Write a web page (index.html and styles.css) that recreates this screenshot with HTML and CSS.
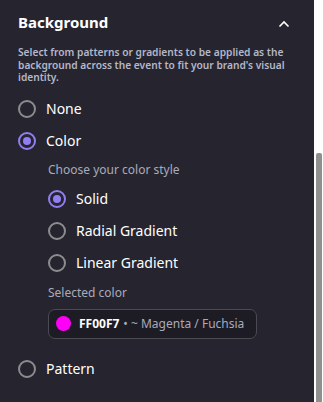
FILE: index.html
```html
<!DOCTYPE html>
<html>
<head>
<meta charset="utf-8">
<link rel="stylesheet" href="styles.css">
</head>
<body>
<div class="frame">
  <div class="panel">
    <div class="header">
      <h2 class="title">Background</h2>
      <svg class="chev" width="12" height="8" viewBox="0 0 12 8"><path d="M1.5 6.5 L6 2 L10.5 6.5" fill="none" stroke="#ffffff" stroke-width="1.6"/></svg>
    </div>
    <p class="desc">Select from patterns or gradients to be applied as the background across the event to fit your brand's visual identity.</p>
    <div class="options">
      <div class="radio"><span class="dot"></span><span class="label">None</span></div>
      <div class="radio on"><span class="dot"></span><span class="label">Color</span></div>
      <div class="sub">
        <div class="hint">Choose your color style</div>
        <div class="radio on"><span class="dot"></span><span class="label">Solid</span></div>
        <div class="radio"><span class="dot"></span><span class="label">Radial Gradient</span></div>
        <div class="radio"><span class="dot"></span><span class="label">Linear Gradient</span></div>
        <div class="hint hint2">Selected color</div>
        <div class="colorbox"><span class="swatch"></span><span class="hex">FF00F7</span><span class="name">• ~ Magenta / Fuchsia</span></div>
      </div>
      <div class="radio pattern"><span class="dot"></span><span class="label">Pattern</span></div>
    </div>
  </div>
  <div class="track"><div class="thumb"></div></div>
</div>
</body>
</html>
```
FILE: styles.css
```css
html, body { margin: 0; padding: 0; }
body { background: #26252f; font-family: "Noto Sans", "Open Sans", sans-serif; }
.frame { display: flex; width: 323px; height: 402px; overflow: hidden; }
.panel { width: 314px; background: #26252f; padding: 0 18px; box-sizing: border-box; }
.track { width: 9px; background: #fdfdfd; padding-top: 153px; box-sizing: border-box; display: flex; justify-content: center; }
.thumb { width: 6px; height: 260px; background: #8f8f8f; border-radius: 2px 2px 0 0; }
.header { display: flex; align-items: center; justify-content: space-between; height: 44px; padding-right: 6px; }
.title { margin: 0; font-size: 15px; font-weight: 700; color: #ffffff; }
.chev { margin-top: 3px; }
.desc { margin: 2px 0 0; font-size: 10.2px; line-height: 12.5px; font-weight: 600; color: #b4b7c9; }
.options { display: flex; flex-direction: column; margin-top: 9px; }
.radio { display: flex; align-items: center; gap: 9px; height: 32px; }
.dot { width: 14px; height: 14px; border: 2px solid #8c8c8f; border-radius: 50%; display: flex; align-items: center; justify-content: center; flex: none; }
.radio.on .dot { border-color: #8f7ff3; }
.radio.on .dot::after { content: ""; width: 8px; height: 8px; border-radius: 50%; background: #8f7ff3; }
.label { font-size: 14px; color: #ffffff; margin-left: 1px; }
.sub { padding-left: 30px; display: flex; flex-direction: column; }
.hint { font-size: 12px; color: #a9abbb; height: 26px; display: flex; align-items: center; }
.hint2 { height: 28px; }
.colorbox { margin-top: 2px; display: flex; align-items: center; height: 30px; width: 209px; box-sizing: border-box; border: 1px solid #4a4a53; border-radius: 7px; background: #1d1c24; padding-left: 7px; }
.swatch { width: 15px; height: 15px; border-radius: 50%; background: #ff00f7; flex: none; }
.hex { margin-left: 8px; font-size: 12px; font-weight: 700; color: #ffffff; }
.name { margin-left: 4px; font-size: 12px; color: #a9abbb; }
.pattern { margin-top: 14px; }
```
